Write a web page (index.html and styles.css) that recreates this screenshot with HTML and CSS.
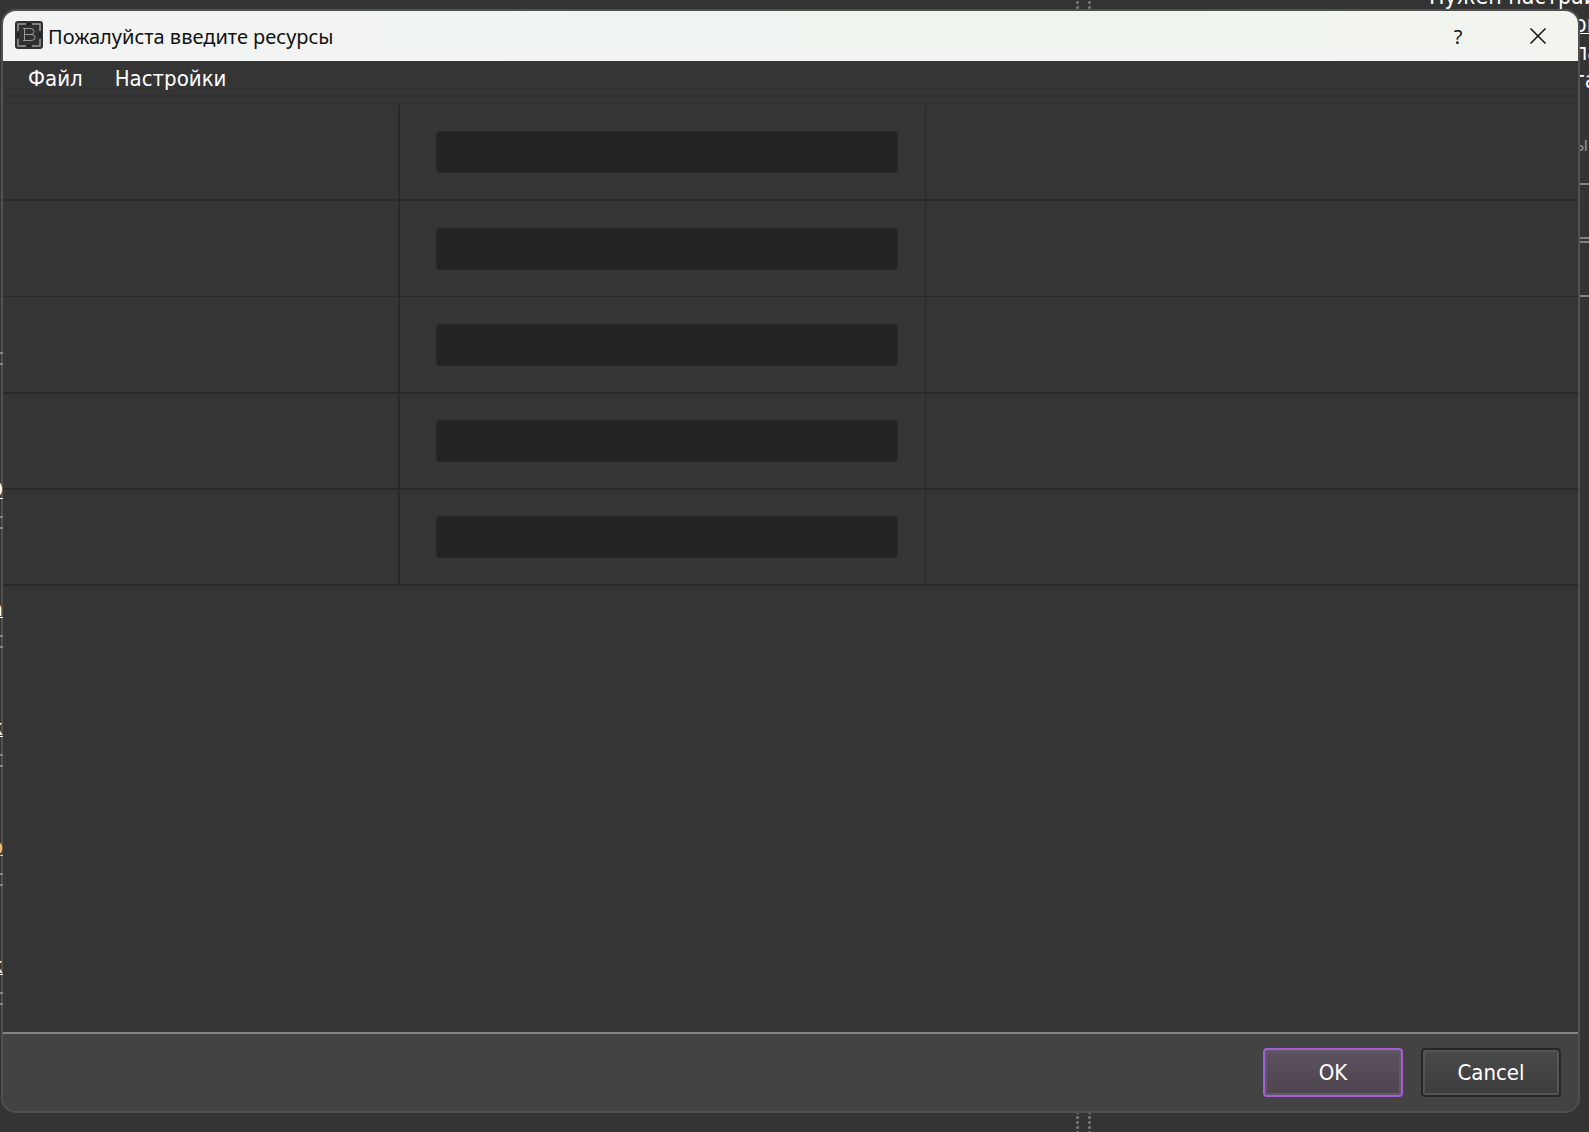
FILE: index.html
```html
<!DOCTYPE html>
<html lang="ru">
  <head>
    <meta charset="UTF-8" />
    <title>Пожалуйста введите ресурсы</title>
    <link rel="stylesheet" href="styles.css" />
  </head>
  <body>
    <!-- main window, behind the dialog -->
    <div class="backdrop">
      <div class="splitter"></div>
      <p class="hint-title">Нужен настрайка</p>
      <div class="hint">
        <a href="#">он</a>
        <span>ла</span>
        <span>га</span>
        <small>ы</small>
      </div>
      <div class="rules">
        <hr />
        <hr />
        <hr />
        <hr />
      </div>
    </div>

    <main class="dialog">
      <header class="title-bar">
        <svg class="app-icon" viewBox="0 0 28 28" fill="none">
          <rect width="28" height="28" rx="3" fill="#2f3032" />
          <path d="M3 10V3h8M17 3h8v7M25 18v7h-8M11 25H3v-7" stroke="#98999b" stroke-width="1.500" />
          <path d="M8 7.500h8q3 0 3 3t-3 3H9.500M16 13.500q4 0 4 3t-4 3H8M9.500 7.500v12" stroke="#98999b" stroke-width="1" />
          <path d="M12 3h4M12 25h4M3 12v4M25 12v4" stroke="#1d1e20" stroke-width="2" />
        </svg>
        <h1 class="title">Пожалуйста введите ресурсы</h1>
        <button class="title-button" type="button" aria-label="Help">?</button>
        <button class="title-button" type="button" aria-label="Close">
          <svg width="16" height="16" viewBox="0 0 16 16" stroke="#111" stroke-width="1.500">
            <path d="M.5.5l15 15M15.500.5l-15 15" />
          </svg>
        </button>
      </header>

      <nav class="menu-bar">
        <button class="menu-item" type="button">Файл</button>
        <button class="menu-item" type="button">Настройки</button>
      </nav>

      <section class="content">
        <table class="resources">
          <tr>
            <td class="name-cell"></td>
            <td class="value-cell"><input type="text" aria-label="1" /></td>
            <td></td>
          </tr>
          <tr>
            <td class="name-cell"></td>
            <td class="value-cell"><input type="text" aria-label="2" /></td>
            <td></td>
          </tr>
          <tr>
            <td class="name-cell"></td>
            <td class="value-cell"><input type="text" aria-label="3" /></td>
            <td></td>
          </tr>
          <tr>
            <td class="name-cell"></td>
            <td class="value-cell"><input type="text" aria-label="4" /></td>
            <td></td>
          </tr>
          <tr>
            <td class="name-cell"></td>
            <td class="value-cell"><input type="text" aria-label="5" /></td>
            <td></td>
          </tr>
        </table>
      </section>

      <footer class="footer">
        <button class="button primary" type="button">OK</button>
        <button class="button" type="button">Cancel</button>
      </footer>
    </main>

    <!-- edge of the list to the left of the dialog -->
    <ul class="edge-list">
      <li class="first"></li>
      <li><a href="#">О</a></li>
      <li><a href="#">а</a></li>
      <li><a href="#">ж</a></li>
      <li class="marked"><a href="#">ф</a></li>
      <li><a href="#">ж</a></li>
    </ul>
  </body>
</html>
```

FILE: styles.css
```css
* {
  margin: 0;
  padding: 0;
  box-sizing: border-box;
}

body {
  display: flex;
  min-height: 100vh;
  padding: 9px 9px 19px 1px;
  background: #343434;
  color: #fff;
  font-family: "DejaVu Sans Condensed", "Noto Sans", sans-serif;
  font-size: 22px;
  overflow: hidden;
}

button,
input {
  border: none;
  background: transparent;
  color: inherit;
  font: inherit;
}

a {
  color: inherit;
  text-decoration-thickness: 1px;
}

/* Backdrop */
.backdrop {
  position: absolute;
  inset: 0;
  overflow: hidden;
  line-height: 28px;
}

.splitter {
  position: absolute;
  top: 0;
  bottom: 0;
  left: 1076px;
  width: 15px;
  background-image: radial-gradient(circle, #777 1px, transparent 2px),
    radial-gradient(circle, #777 1px, transparent 2px);
  background-size: 3px 5px;
  background-position: left top, right top;
  background-repeat: repeat-y;
}

.hint-title {
  position: absolute;
  top: -18px;
  right: -20px;
  width: 180px;
  font-size: 23px;
  white-space: nowrap;
}

.hint {
  position: absolute;
  top: 10px;
  right: 0;
  display: flex;
  flex-direction: column;
  width: 15px;
  font-size: 23px;
  white-space: nowrap;
}

.hint small {
  margin-top: 36px;
  color: #888;
  font-size: 20px;
}

.rules {
  position: absolute;
  top: 183px;
  right: 0;
  width: 11px;
}

.rules hr {
  height: 2px;
  border: none;
  background: #858585;
}

.rules hr:nth-child(2) {
  margin-top: 52px;
}

.rules hr:nth-child(3) {
  margin-top: 2px;
}

.rules hr:nth-child(4) {
  margin-top: 52px;
}

/* Dialog */
.dialog {
  position: relative;
  display: flex;
  flex: 1;
  flex-direction: column;
  border: 2px solid #505050;
  border-radius: 15px;
  background: #353535;
  overflow: hidden;
}

.title-bar {
  display: flex;
  align-items: center;
  height: 50px;
  padding: 0 0 0 12px;
  background: linear-gradient(90deg, #f2f4f4, #eff4ef 60%, #f2f4ee);
  color: #111;
  font-family: "Noto Sans", sans-serif;
}

.app-icon {
  width: 28px;
  height: 28px;
  margin-bottom: 2px;
}

.title {
  flex: 1;
  margin-left: 5px;
  font-size: 20px;
  font-weight: 400;
}

.title-button {
  display: flex;
  align-items: center;
  justify-content: center;
  width: 80px;
  height: 50px;
  font-size: 20px;
}

.menu-bar {
  display: flex;
  height: 36px;
  padding: 0 9px;
  border-bottom: 2px solid #2f2f2f;
}

.menu-item {
  padding: 0 16px;
}

/* Resources */
.content {
  flex: 1;
  padding-top: 8px;
}

.resources {
  width: 100%;
  border-spacing: 0;
  table-layout: fixed;
}

.resources td {
  height: 96px;
  border-bottom: 2px solid #292929;
}

.resources tr:nth-child(2) td {
  border-bottom-width: 1px;
}

.resources tr:nth-child(3) td {
  height: 97px;
}

.resources .name-cell {
  width: 25.2%;
  border-right: 2px solid #292929;
}

.resources .value-cell {
  width: 33.4%;
  padding: 0 27px 0 36px;
  border-right: 1px solid #292929;
}

.value-cell input {
  display: block;
  width: 100%;
  height: 42px;
  padding: 0 8px;
  border: 2px solid #262626;
  border-radius: 4px;
  background: #232323;
}

/* Footer */
.footer {
  display: flex;
  justify-content: flex-end;
  gap: 18px;
  padding: 14px 17px;
  border-top: 2px solid #858585;
  background: #434343;
}

.button {
  width: 140px;
  height: 49px;
  border: 2px solid #272727;
  border-radius: 4px;
  background: linear-gradient(#4a4a4a, #3d3d3d);
  box-shadow: inset 0 0 0 2px #555;
}

.button.primary {
  border-color: #a55fd3;
  background: linear-gradient(#5d525f, #4d444f);
  box-shadow: inset 0 0 0 2px #62586a;
}

/* Left edge */
.edge-list {
  position: absolute;
  top: 312px;
  left: 0;
  width: 3px;
  list-style: none;
  overflow: hidden;
}

.edge-list li {
  display: flex;
  justify-content: flex-end;
  height: 119px;
  background: linear-gradient(#858585, #858585) 0 40px / 3px 2px no-repeat,
    linear-gradient(#858585, #858585) 0 51px / 3px 2px no-repeat;
  line-height: 28px;
}

.edge-list .first {
  height: 164px;
}

.edge-list .marked {
  color: #ffc57c;
}
```
